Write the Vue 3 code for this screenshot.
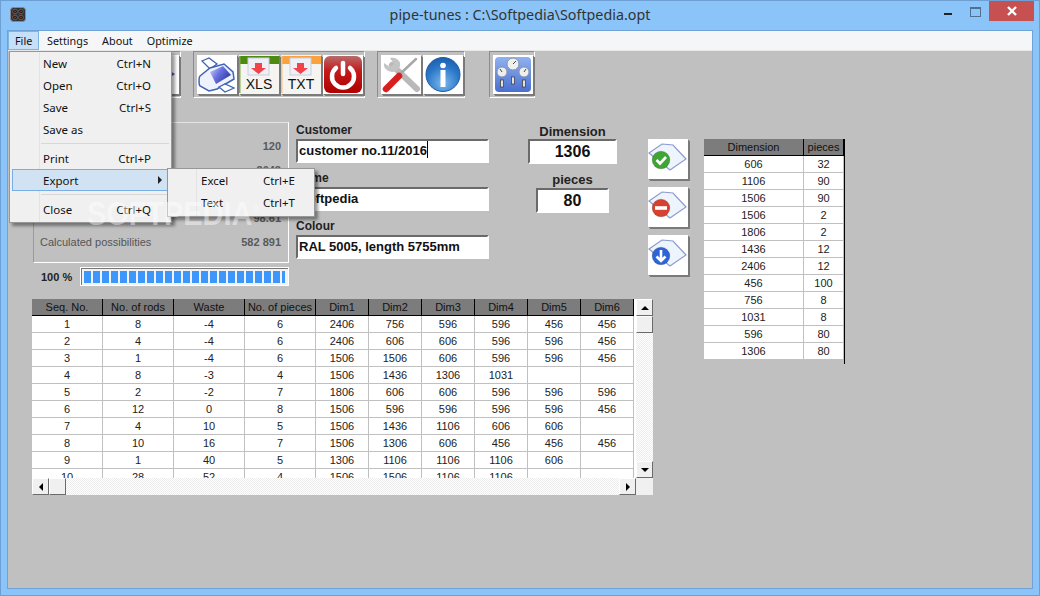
<template>
  <div class="window">
    <!-- Barra de título -->
    <header class="titlebar">
      <div class="title-left">
        <svg class="app-icon" viewBox="0 0 16 15">
          <rect x=".5" y=".5" width="15" height="14" rx="3" fill="#333" stroke="#8a8a8a" />
          <circle cx="5" cy="4.500" r="2.300" fill="#111" stroke="#7a7a7a" stroke-width=".7" />
          <circle cx="11" cy="4.500" r="2.300" fill="#111" stroke="#7a7a7a" stroke-width=".7" />
          <circle cx="5" cy="10.500" r="2.300" fill="#111" stroke="#7a7a7a" stroke-width=".7" />
          <circle cx="11" cy="10.500" r="2.300" fill="#111" stroke="#7a7a7a" stroke-width=".7" />
          <path d="M5 4.500h.01M11 4.500h.01M5 10.500h.01M11 10.500h.01" stroke="#b02a2a" stroke-width="2" stroke-linecap="round" />
        </svg>
      </div>
      <div class="title-text">pipe-tunes : C:\Softpedia\Softpedia.opt</div>
      <div class="title-right">
        <span class="win-min"></span>
        <span class="win-max"></span>
        <span class="win-close">
          <svg width="12" height="10" viewBox="0 0 12 10"><path d="M2 1l8 8M10 1l-8 8" stroke="#fff" stroke-width="2.400" fill="none" /></svg>
        </span>
      </div>
    </header>

    <div class="frame">
      <nav class="menubar">
        <span
          v-for="m in menus"
          :key="m"
          class="menu-item"
          :class="{ active: m === 'File' }"
        >{{ m }}</span>
      </nav>

      <div class="client">
        <!-- Barra de ferramentas -->
        <div class="toolbar">
          <div class="tool-group first">
            <button class="tool-btn" type="button"></button>
            <button class="tool-btn" type="button"></button>
            <button class="tool-btn" type="button">
              <svg class="ico" viewBox="0 0 40 39"><path d="M26 13l10 6-10 7z" fill="#5b4fa8" /></svg>
            </button>
          </div>

          <div class="tool-group">
            <button class="tool-btn" type="button">
              <svg class="ico" viewBox="0 0 40 39">
                <defs>
                  <linearGradient id="prn" x1="0" y1="0" x2="1" y2=".6">
                    <stop offset="0" stop-color="#d5d9f8" />
                    <stop offset=".5" stop-color="#6a70e0" />
                    <stop offset="1" stop-color="#2b3aa0" />
                  </linearGradient>
                </defs>
                <path d="M5 6l7-3 8 6-7 5z" fill="#fff" stroke="#3f63b5" stroke-width="1.300" />
                <path d="M2 26c0-2 0-4 1-5l10-8 14-4 9 8 1 7-17 10-8 2-9-5c-1-1-1-3-1-5z" fill="#eef2fd" stroke="#3f63b5" stroke-width="1.500" />
                <path d="M13 17l13-6 8 9-15 9z" fill="url(#prn)" />
                <path d="M22 32l6-3 9 4-9 4z" fill="#fff" stroke="#3f63b5" stroke-width="1.300" />
              </svg>
            </button>

            <button class="tool-btn" type="button">
              <svg class="ico" viewBox="0 0 40 39">
                <rect x="0" y="0" width="40" height="39" fill="#f6f4f0" />
                <rect x="0" y="1" width="40" height="8" fill="#4f8a10" />
                <rect x="0" y="1" width="1.500" height="37" fill="#7eb04a" />
                <rect x="9" y="3" width="21" height="17" fill="#eef0f6" stroke="#c9cde0" />
                <path d="M16 8h7v5h4l-7.500 6-7.500-6h4z" fill="#f0444a" />
                <text x="20" y="34" class="ico-text">XLS</text>
              </svg>
            </button>

            <button class="tool-btn" type="button">
              <svg class="ico" viewBox="0 0 40 39">
                <rect x="0" y="0" width="40" height="39" fill="#f6f4f0" />
                <rect x="0" y="1" width="40" height="8" fill="#f9a23e" />
                <rect x="0" y="1" width="1.500" height="37" fill="#f5c48a" />
                <rect x="9" y="3" width="21" height="17" fill="#eef0f6" stroke="#c9cde0" />
                <path d="M16 8h7v5h4l-7.500 6-7.500-6h4z" fill="#f0444a" />
                <text x="20" y="34" class="ico-text">TXT</text>
              </svg>
            </button>

            <button class="tool-btn" type="button">
              <svg class="ico" viewBox="0 0 40 39">
                <defs>
                  <linearGradient id="pwr" x1="0" y1="0" x2="0" y2="1">
                    <stop offset="0" stop-color="#b86a6a" />
                    <stop offset=".4" stop-color="#c41a1a" />
                    <stop offset="1" stop-color="#b00000" />
                  </linearGradient>
                </defs>
                <rect x="1" y="1" width="38" height="37" rx="6" fill="url(#pwr)" />
                <path d="M13 13a11 11 0 1 0 14 0" fill="none" stroke="#fff" stroke-width="4.500" stroke-linecap="round" />
                <path d="M20 8v11" stroke="#fff" stroke-width="4.500" stroke-linecap="round" />
              </svg>
            </button>
          </div>

          <div class="tool-group second">
            <button class="tool-btn" type="button">
              <svg class="ico" viewBox="0 0 40 39">
                <path d="M11 10l25 24" stroke="#b9b9b9" stroke-width="6" stroke-linecap="round" />
                <path d="M3 8l6 4 4-3-4-6c4-1 9 1 10 5 1 5-3 9-8 9-5-1-9-4-8-9z" fill="#c4c4c4" />
                <path d="M18 20L35 4" stroke="#a8a8a8" stroke-width="2.500" stroke-linecap="round" />
                <path d="M5 34l13-13" stroke="#d81f1f" stroke-width="6.500" stroke-linecap="round" />
              </svg>
            </button>

            <button class="tool-btn" type="button">
              <svg class="ico" viewBox="0 0 40 39">
                <defs>
                  <radialGradient id="inf" cx=".5" cy=".75" r=".8">
                    <stop offset="0" stop-color="#7db8ee" />
                    <stop offset=".6" stop-color="#2b78c8" />
                    <stop offset="1" stop-color="#1a5aa8" />
                  </radialGradient>
                </defs>
                <circle cx="20" cy="19.500" r="17" fill="url(#inf)" stroke="#1d5da6" />
                <circle cx="20" cy="10.500" r="2.800" fill="#fff" />
                <rect x="17.500" y="15" width="5" height="17" fill="#fff" />
              </svg>
            </button>
          </div>

          <div class="tool-group third">
            <button class="tool-btn" type="button">
              <svg class="ico" viewBox="0 0 40 39">
                <defs>
                  <linearGradient id="gau" x1="0" y1="0" x2="0" y2="1">
                    <stop offset="0" stop-color="#8fb2f0" />
                    <stop offset="1" stop-color="#4a6fd0" />
                  </linearGradient>
                </defs>
                <rect x="2" y="2" width="36" height="35" rx="4" fill="url(#gau)" />
                <circle cx="20" cy="9" r="6" fill="#eef0f0" stroke="#8a94a8" />
                <circle cx="9" cy="17" r="5" fill="#eef0f0" stroke="#8a94a8" />
                <circle cx="31" cy="17" r="5" fill="#eef0f0" stroke="#8a94a8" />
                <path d="M20 9l3-3M9 17l-2-3M31 17l2-3" stroke="#444" fill="none" />
                <rect x="7.500" y="25" width="3" height="7" fill="#dfe3e8" stroke="#444" stroke-width=".8" />
                <rect x="18.500" y="22" width="3" height="7" fill="#dfe3e8" stroke="#444" stroke-width=".8" />
                <rect x="29.500" y="25" width="3" height="7" fill="#dfe3e8" stroke="#444" stroke-width=".8" />
              </svg>
            </button>
          </div>
        </div>

        <div class="main">
          <div class="left-col">
            <div class="top-row">
              <!-- Resumo do cálculo -->
              <div class="summary">
                <section class="panel">
                  <div v-for="(r, i) in resumo" :key="i" class="panel-row">
                    <span>{{ r.label }}</span>
                    <b>{{ r.valor }}</b>
                  </div>
                </section>

                <div class="progress-line">
                  <b class="progress-label">100 %</b>
                  <div class="progress">
                    <span v-for="n in 23" :key="n" class="seg"></span>
                  </div>
                </div>
              </div>

              <div class="form">
                <label>Customer</label>
                <div class="field">customer no.11/2016<span class="caret"></span></div>
                <label class="next">Name</label>
                <div class="field">Softpedia</div>
                <label class="next">Colour</label>
                <div class="field">RAL 5005, length 5755mm</div>
              </div>

              <div class="dim-col">
                <label>Dimension</label>
                <div class="field big dim">1306</div>
                <label class="next">pieces</label>
                <div class="field big pcs">80</div>
              </div>

              <div class="actions">
                <button v-for="a in acoes" :key="a.nome" class="act-btn" type="button">
                  <svg class="ico" viewBox="0 0 40 40">
                    <path d="M1 14L14 5l11 1 13 14-16 11z" fill="#eef4fc" stroke="#8d9ad2" stroke-width="1.200" />
                    <circle cx="13" cy="21" r="8.800" :fill="a.cor" stroke="rgba(0,0,0,.2)" />
                    <path v-if="a.nome === 'ok'" d="M8.500 21l3.500 3.500 6-6.500" stroke="#fff" stroke-width="2.600" fill="none" />
                    <rect v-if="a.nome === 'remover'" x="7" y="19.200" width="12" height="3.600" fill="#fff" />
                    <path v-if="a.nome === 'baixar'" d="M13 15v11M8.500 21.500l4.500 4.500 4.500-4.500" stroke="#fff" stroke-width="2.600" fill="none" />
                  </svg>
                </button>
              </div>
            </div>

            <!-- Tabela de resultados -->
            <div class="grid-wrap">
              <div class="grid-view">
                <table class="tbl">
                  <colgroup>
                    <col v-for="n in 4" :key="n" class="col-a" />
                    <col v-for="n in 6" :key="'d' + n" class="col-b" />
                  </colgroup>
                  <thead>
                    <tr>
                      <th v-for="c in colunas" :key="c">{{ c }}</th>
                    </tr>
                  </thead>
                  <tbody>
                    <tr v-for="(l, i) in linhas" :key="i">
                      <td v-for="n in 10" :key="n">{{ l[n - 1] }}</td>
                    </tr>
                  </tbody>
                </table>
              </div>

              <div class="vscroll">
                <span class="sb-btn"><i class="arr up"></i></span>
                <span class="sb-btn thumb"></span>
                <span class="sb-fill"></span>
                <span class="sb-btn"><i class="arr down"></i></span>
              </div>

              <div class="hscroll">
                <span class="sb-btn"><i class="arr left"></i></span>
                <span class="sb-btn thumb"></span>
                <span class="sb-fill"></span>
                <span class="sb-btn"><i class="arr right"></i></span>
              </div>

              <div class="corner"></div>
            </div>
          </div>

          <!-- Lista de peças -->
          <div class="pieces-wrap">
            <table class="tbl pieces">
              <colgroup>
                <col class="col-c" />
                <col class="col-d" />
              </colgroup>
              <thead>
                <tr>
                  <th>Dimension</th>
                  <th>pieces</th>
                </tr>
              </thead>
              <tbody>
                <tr v-for="(p, i) in pecas" :key="i">
                  <td>{{ p[0] }}</td>
                  <td>{{ p[1] }}</td>
                </tr>
              </tbody>
            </table>
          </div>
        </div>
      </div>
    </div>

    <!-- Menu aberto -->
    <div class="dropdown">
      <template v-for="(item, i) in menuFile" :key="i">
        <div v-if="item.sep" class="sep"></div>
        <div v-else class="dd-item" :class="{ hot: item.nome === 'Export' }">
          <span>{{ item.nome }}</span>
          <span v-if="item.atalho">{{ item.atalho }}</span>
          <i v-if="item.nome === 'Export'" class="sub-arrow"></i>
        </div>
      </template>
    </div>

    <div class="dropdown sub">
      <div class="dd-item"><span>Excel</span><span>Ctrl+E</span></div>
      <div class="dd-item"><span>Text</span><span>Ctrl+T</span></div>
    </div>

    <div class="watermark">SOFTPEDIA<sup>®</sup></div>
  </div>
</template>

<script setup>
const menus = ['File', 'Settings', 'About', 'Optimize']

const menuFile = [
  { nome: 'New', atalho: 'Ctrl+N' },
  { nome: 'Open', atalho: 'Ctrl+O' },
  { nome: 'Save', atalho: 'Ctrl+S' },
  { nome: 'Save as' },
  { sep: true },
  { nome: 'Print', atalho: 'Ctrl+P' },
  { nome: 'Export' },
  { sep: true },
  { nome: 'Close', atalho: 'Ctrl+Q' },
]

// os rótulos de cima ficam atrás do menu aberto
const resumo = [
  { label: '', valor: '120' },
  { label: '', valor: '3043' },
  { label: '', valor: '' },
  { label: '', valor: '98.61' },
  { label: 'Calculated possibilities', valor: '582 891' },
]

const acoes = [
  { nome: 'ok', cor: '#3fa535' },
  { nome: 'remover', cor: '#d8402f' },
  { nome: 'baixar', cor: '#2f63d8' },
]

const colunas = ['Seq. No.', 'No. of rods', 'Waste', 'No. of pieces', 'Dim1', 'Dim2', 'Dim3', 'Dim4', 'Dim5', 'Dim6']

const linhas = [
  [1, 8, -4, 6, 2406, 756, 596, 596, 456, 456],
  [2, 4, -4, 6, 2406, 606, 606, 596, 596, 456],
  [3, 1, -4, 6, 1506, 1506, 606, 596, 596, 456],
  [4, 8, -3, 4, 1506, 1436, 1306, 1031],
  [5, 2, -2, 7, 1806, 606, 606, 596, 596, 596],
  [6, 12, 0, 8, 1506, 596, 596, 596, 596, 456],
  [7, 4, 10, 5, 1506, 1436, 1106, 606, 606],
  [8, 10, 16, 7, 1506, 1306, 606, 456, 456, 456],
  [9, 1, 40, 5, 1306, 1106, 1106, 1106, 606],
  [10, 28, 52, 4, 1506, 1506, 1106, 1106],
]

const pecas = [
  [606, 32], [1106, 90], [1506, 90], [1506, 2], [1806, 2], [1436, 12],
  [2406, 12], [456, 100], [756, 8], [1031, 8], [596, 80], [1306, 80],
]
</script>

<style>
html, body {
  margin: 0;
  background: #8ac4f8;
}
</style>

<style scoped>
.window {
  position: relative;
  width: 1040px;
  height: 596px;
  box-sizing: border-box;
  padding: 0 7px 7px;
  display: flex;
  flex-direction: column;
  background: #8ac4f8;
  box-shadow: inset 0 0 0 1px #6e9fd2;
  overflow: hidden;
  font-family: "Liberation Sans", Arial, sans-serif;
  font-size: 11px;
  color: #111;
}

.titlebar {
  height: 30px;
  flex: none;
  display: grid;
  grid-template-columns: 1fr auto 1fr;
  align-items: center;
}

.title-left {
  padding-left: 3px;
}

.app-icon {
  display: block;
  width: 16px;
  height: 15px;
  margin-top: -1px;
}

.title-text {
  font-family: "Noto Sans", sans-serif;
  font-size: 14.3px;
  color: #333;
  margin-top: -1px;
}

.title-right {
  display: flex;
  justify-content: flex-end;
  align-items: flex-start;
  height: 100%;
  margin-right: -1px;
}

.win-min {
  width: 8px;
  height: 2px;
  background: #222;
  margin: 13px 18px 0 0;
}

.win-max {
  width: 9px;
  height: 7px;
  border: 1px solid #50708f;
  border-top-width: 2px;
  margin: 7px 8px 0 0;
}

.win-close {
  width: 45px;
  height: 20px;
  margin-top: 1px;
  background: #c75050;
  display: flex;
  align-items: center;
  justify-content: center;
}

.frame {
  flex: 1;
  display: flex;
  flex-direction: column;
  border: 1px solid #6fa3d8;
  min-height: 0;
}

.menubar {
  height: 19px;
  flex: none;
  display: flex;
  background: #f5f6f7;
  border-bottom: 1px solid #e8e8e8;
  font-family: "Noto Sans", sans-serif;
  font-size: 10.8px;
  line-height: 19px;
  color: #111;
}

.menu-item {
  padding: 0 7px;
  height: 19px;
}

.menu-item.active {
  width: 31px;
  box-sizing: border-box;
  margin-right: 1px;
  background: #c5e0f8;
  box-shadow: inset 0 0 0 1px #7fb3e3;
}

.client {
  flex: 1;
  background: #c0c0c0;
  padding-left: 24px;
  min-height: 0;
}

.toolbar {
  display: flex;
  align-items: flex-start;
  height: 71px;
}

.tool-group {
  display: flex;
  gap: 2px;
  padding: 3px 1px 3px 3px;
  height: 47px;
  box-sizing: border-box;
  border: 1px solid #fff;
  border-top-color: #8c8c8c;
  border-left-color: #8c8c8c;
  margin-right: 12px;
}

.tool-group.first {
  margin-left: 19px;
}

.tool-group.second {
  margin-right: 24px;
}

.tool-btn {
  width: 40px;
  height: 39px;
  padding: 0;
  background: #fff;
  border: 0;
  box-shadow: 1px 1px 0 #7a7a7a, 2px 2px 0 #7a7a7a;
  overflow: hidden;
}

.ico {
  display: block;
  width: 100%;
  height: 100%;
}

.ico-text {
  font-family: "Liberation Sans", sans-serif;
  font-size: 14px;
  text-anchor: middle;
  fill: #111;
}

.main {
  display: flex;
  gap: 16px;
  align-items: flex-start;
}

.left-col {
  width: 656px;
}

.top-row {
  display: flex;
  height: 177px;
}

.summary {
  width: 256px;
  margin-left: 1px;
}

.panel {
  height: 141px;
  box-sizing: border-box;
  border: 1px solid #fff;
  border-top-color: #e4e4e4;
  border-left-color: #9a9a9a;
  padding: 11px 7px 0 6px;
  color: #555;
}

.panel-row {
  height: 24px;
  display: flex;
  justify-content: space-between;
  align-items: center;
}

.panel-row b {
  color: #5a5a5a;
}

.progress-line {
  display: flex;
  align-items: center;
  height: 19px;
  margin-top: 4px;
}

.progress-label {
  width: 47px;
  padding-left: 8px;
  box-sizing: border-box;
  color: #222;
}

.progress {
  width: 209px;
  height: 19px;
  box-sizing: border-box;
  display: flex;
  gap: 2px;
  padding: 3px 3px 2px;
  background: #f2f2f2;
  border: 1px solid #fff;
  box-shadow: inset 1px 1px 0 #777;
}

.seg {
  width: 7px;
  flex: none;
  background: #3c96fb;
}

.seg:last-child {
  width: 3px;
}

.form {
  width: 193px;
  margin-left: 7px;
}

.form label,
.dim-col label {
  display: block;
  height: 17px;
  line-height: 16px;
  font-size: 12px;
  font-weight: bold;
  color: #222;
}

.form label.next,
.dim-col label.next {
  margin-top: 7px;
}

.field {
  height: 24px;
  box-sizing: border-box;
  background: #fff;
  border: 2px solid;
  border-color: #6a6a6a #fff #fff #6a6a6a;
  padding: 0 1px;
  font-size: 13px;
  font-weight: bold;
  line-height: 19px;
  white-space: nowrap;
  overflow: hidden;
  color: #111;
}

.caret {
  display: inline-block;
  width: 1px;
  height: 17px;
  background: #000;
  vertical-align: -3px;
}

.dim-col {
  width: 89px;
  margin-left: 39px;
  text-align: center;
}

.dim-col label {
  font-size: 13px;
  line-height: 19px;
}

.dim-col label.next {
  line-height: 17px;
}

.field.big {
  height: 25px;
  font-size: 16px;
  line-height: 21px;
  text-align: center;
}

.field.pcs {
  width: 73px;
  margin: 0 auto;
}

.actions {
  margin-left: 31px;
  padding-top: 17px;
  display: flex;
  flex-direction: column;
  gap: 8px;
}

.act-btn {
  width: 40px;
  height: 40px;
  padding: 0;
  background: #fff;
  border: 0;
  box-shadow: 1px 1px 0 #7a7a7a, 2px 2px 0 #7a7a7a;
}

.grid-wrap {
  width: 621px;
  display: grid;
  grid-template-columns: 604px 17px;
  grid-template-rows: 179px 17px;
}

.grid-view {
  overflow: hidden;
  background: #fff;
}

.tbl {
  border-collapse: separate;
  border-spacing: 0;
  table-layout: fixed;
  width: 602px;
  background: #fff;
  font-size: 11px;
}

.col-a {
  width: 71px;
}

.col-b {
  width: 53px;
}

.col-c {
  width: 100px;
}

.col-d {
  width: 40px;
}

.tbl th {
  height: 16px;
  padding: 0;
  background: #7c7c7c;
  border-right: 1px solid #000;
  border-bottom: 1px solid #000;
  font-weight: normal;
  color: #111;
  white-space: nowrap;
  overflow: hidden;
}

.tbl td {
  height: 16px;
  padding: 0;
  text-align: center;
  border-right: 1px solid #c0c0c0;
  border-bottom: 1px solid #c0c0c0;
  color: #222;
}

.vscroll {
  display: flex;
  flex-direction: column;
}

.hscroll {
  display: flex;
}

.sb-btn {
  flex: none;
  width: 17px;
  height: 17px;
  box-sizing: border-box;
  background: #f0f0f0;
  border: 1px solid;
  border-color: #fff #6a6a6a #6a6a6a #fff;
  display: flex;
  align-items: center;
  justify-content: center;
}

.sb-fill {
  flex: 1;
  background: repeating-conic-gradient(#fff 0 25%, #ececec 0 50%) 0 0 / 2px 2px;
}

.corner {
  background: #f0f0f0;
}

.arr {
  width: 0;
  height: 0;
  border: 4px solid transparent;
}

.arr.up {
  border-top: 0;
  border-bottom-color: #000;
}

.arr.down {
  border-bottom: 0;
  border-top-color: #000;
}

.arr.left {
  border-left: 0;
  border-right-color: #000;
}

.arr.right {
  border-right: 0;
  border-left-color: #000;
}

.pieces-wrap {
  margin-top: 17px;
  height: 225px;
  width: 141px;
  background: linear-gradient(#000, #000) right top / 1px 100% no-repeat;
}

.tbl.pieces {
  width: 140px;
  background: transparent;
}

.tbl.pieces tr td {
  background: #fff;
}

.dropdown {
  position: absolute;
  left: 9px;
  top: 51px;
  width: 163px;
  box-sizing: border-box;
  padding: 0 2px 2px;
  background: linear-gradient(#e2e3e3, #e2e3e3) 29px 0 / 1px 100% no-repeat #f0f0f0;
  border: 1px solid #979797;
  box-shadow: 3px 3px 3px rgba(0, 0, 0, 0.4);
  font-family: "Noto Sans", sans-serif;
  font-size: 11.5px;
  color: #111;
}

.dd-item {
  position: relative;
  height: 22px;
  display: flex;
  align-items: center;
  justify-content: space-between;
  padding: 0 18px 0 31px;
}

.dd-item.hot {
  background: #d1e2f2;
  box-shadow: inset 0 0 0 1px #78aee5;
}

.sep {
  height: 1px;
  margin: 3px 0 3px 29px;
  background: #d7d7d7;
}

.sub-arrow {
  position: absolute;
  right: 7px;
  top: 7px;
  border: 4px solid transparent;
  border-right: 0;
  border-left-color: #222;
}

.dropdown.sub {
  left: 167px;
  top: 168px;
  width: 148px;
  padding: 0 2px 3px;
  background-position: 28px 0;
}

.dropdown.sub .dd-item {
  padding-left: 31px;
  padding-right: 17px;
}

.watermark {
  position: absolute;
  left: 87px;
  top: 191px;
  font-size: 34px;
  font-weight: bold;
  line-height: 36px;
  color: rgba(255, 255, 255, 0.45);
  transform: scaleX(0.85);
  transform-origin: left top;
  white-space: nowrap;
  pointer-events: none;
}

.watermark sup {
  font-size: 11px;
  font-weight: normal;
}
</style>
